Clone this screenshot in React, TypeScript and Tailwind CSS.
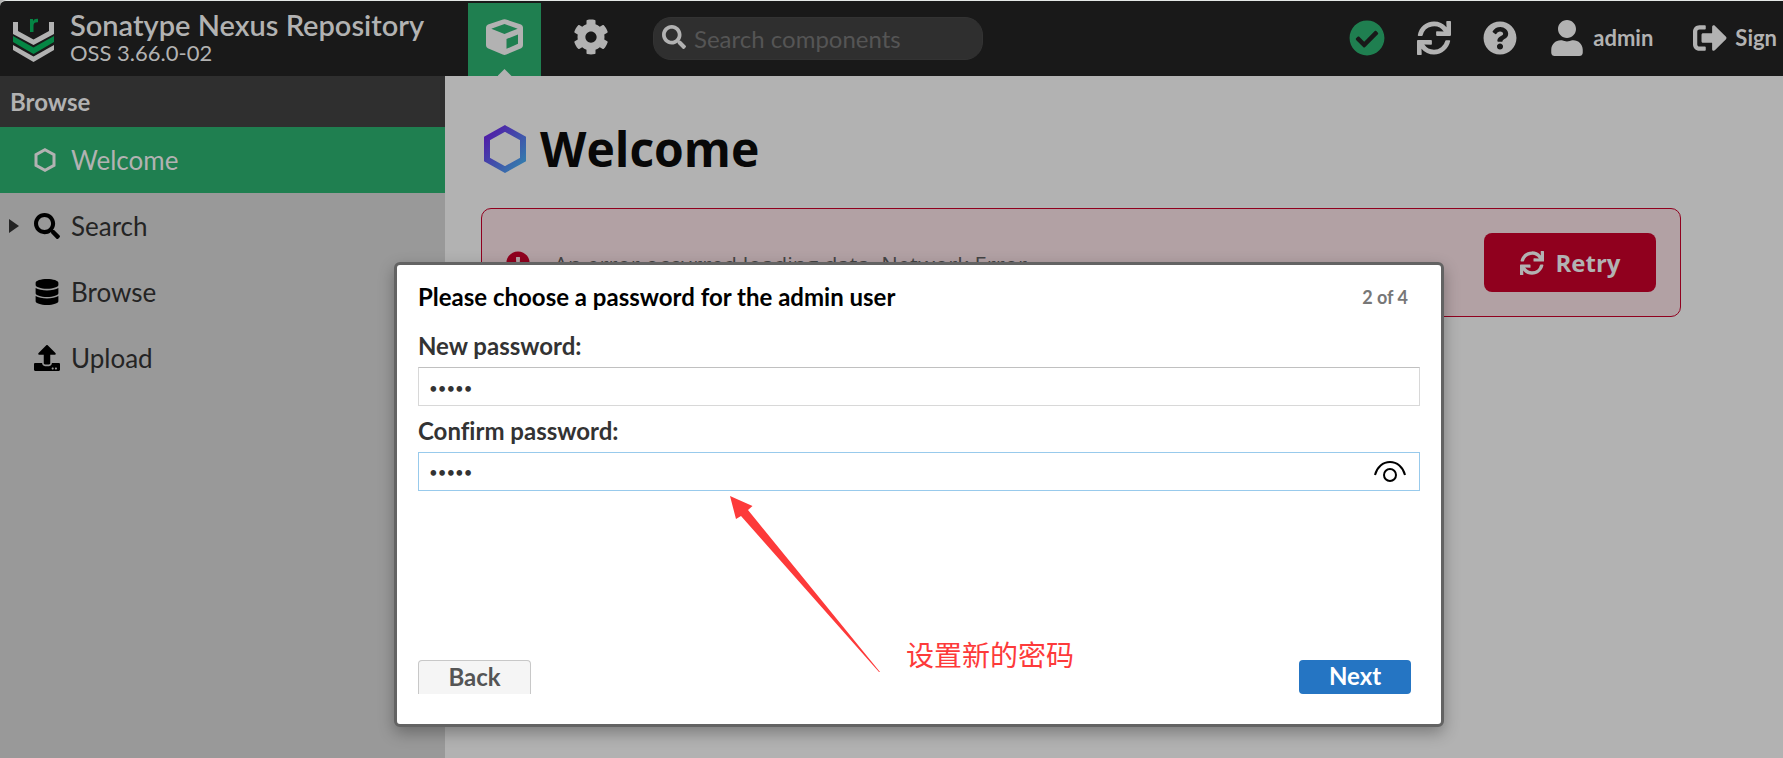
import { useState } from "react";
import {
  FaCheckCircle, FaCog, FaDatabase, FaExclamationCircle, FaQuestionCircle,
  FaSearch, FaSignOutAlt, FaSync, FaUpload, FaUser,
} from "react-icons/fa";

function Hexagon({ className, stroke }: { className: string; stroke: string }) {
  return (
    <svg viewBox="0 0 42 48" className={className} fill="none" aria-hidden="true">
      <defs>
        <linearGradient id="hex" x1="0" y1="0" x2="1" y2="1">
          <stop offset="0.1" stopColor="#4f20a8" />
          <stop offset="0.9" stopColor="#3578ad" />
        </linearGradient>
      </defs>
      <path d="M21 3.500 L39 13.500 V34.500 L21 44.500 L3 34.500 V13.500 Z" stroke={stroke} strokeWidth={6} />
    </svg>
  );
}

function Logo() {
  return (
    <svg viewBox="0 0 41 45" className="mt-1 h-[45px] w-[41px] shrink-0" aria-hidden="true">
      <path d="M0 4h5v9l15.500 8.500L36 13V4h5v12L20.500 27 0 16z" fill="#b2b2b2" />
      <path d="M0 18l20.500 11.500L41 18v6L20.500 36 0 24z" fill="#058544" />
      <path d="M0 27l20.500 11.500L41 27v5L20.500 44 0 32z" fill="#b2b2b2" />
      <path d="M17 1h3v2.200C21 1.500 22.500 .7 25 .9v3.300c-3-.2-4.500.8-4.500 3.500V14H17z" fill="#058544" />
    </svg>
  );
}

function Cube() {
  return (
    <svg viewBox="0 0 37 36" className="h-9 w-[37px]" aria-hidden="true">
      <path
        fillRule="evenodd"
        fill="#b2b2b2"
        d="M17 .5q1.500-.6 3 0L35 5.500q2 .8 2 3v17.800q0 2-1.800 2.900L20.300 35.500q-1.800.9-3.600 0L1.800 29.200Q0 28.300 0 26.300V8.500q0-2.200 2-3zM18.500 5 5.300 9.700 18.500 15l13.200-5.300zM20.500 20v9.800l11.500-5V15.400z"
      />
    </svg>
  );
}

const items = [
  { label: "Welcome", icon: <Hexagon className="h-6 w-[22px]" stroke="#b2b2b2" />, active: true },
  { label: "Search", icon: <FaSearch size={26} color="#000" />, expandable: true },
  { label: "Browse", icon: <FaDatabase size={26} color="#000" /> },
  { label: "Upload", icon: <FaUpload size={26} color="#000" /> },
];

export default function App() {
  const [first, setFirst] = useState("admin");
  const [second, setSecond] = useState("admin");
  return (
    <div className="relative flex min-h-screen flex-col overflow-hidden bg-[#b2b2b2] font-['Lato',sans-serif] [font-variant-ligatures:none]">
      <header className="flex h-[76px] shrink-0 items-center rounded-tl-md border-t border-[#e4e8e6] bg-[#191919] text-[#b2b2b2]">
        <div className="flex w-[468px] shrink-0 items-center gap-4 pl-[13px]">
          <Logo />
          <div className="pb-1">
            <div className="text-[29px] leading-8 font-semibold">Sonatype Nexus Repository</div>
            <div className="text-[22px] leading-6">OSS 3.66.0-02</div>
          </div>
        </div>
        <button aria-label="Browse" className="relative flex h-[73px] w-[73px] shrink-0 items-center justify-center self-end bg-[#1f7f50] pb-1.5">
          <Cube />
          <span className="absolute bottom-0 left-1/2 h-[7px] w-3.5 -translate-x-1/2 bg-[#b2b2b2] [clip-path:polygon(50%_0,100%_100%,0_100%)]" />
        </button>
        <button aria-label="Settings" className="ml-8 shrink-0 pb-1"><FaCog size={36} /></button>
        <label className="ml-11 flex h-[43px] w-[330px] items-center gap-2 rounded-[18px] border border-[#333] bg-[#2f2f2f] px-2">
          <FaSearch size={24} className="mb-1 shrink-0" />
          <input aria-label="Search components" placeholder="Search components" className="min-w-0 flex-1 bg-transparent text-[24px] outline-none placeholder:text-[#555]" />
        </label>
        <div className="ml-auto flex items-center pr-1.5 pb-0.5 text-[22px] font-bold">
          <button aria-label="System status"><FaCheckCircle size={36} color="#1f7f50" /></button>
          <button aria-label="Refresh" className="ml-8"><FaSync size={34} /></button>
          <button aria-label="Help" className="ml-8"><FaQuestionCircle size={34} /></button>
          <button className="ml-8 flex items-center gap-2"><FaUser size={36} /><span>admin</span></button>
          <button className="ml-10 flex items-center gap-2"><FaSignOutAlt size={34} /><span>Sign</span></button>
        </div>
      </header>
      <div className="flex flex-1">
        <nav className="w-[445px] shrink-0 bg-[#999]">
          <h2 className="flex h-[51px] items-center bg-[#2f2f2f] px-2.5 text-[24px] font-bold text-[#b2b2b2]">Browse</h2>
          {items.map((it) => (
            <a key={it.label} href="#" className={`flex h-[66px] items-center text-[26px] ${it.active ? "bg-[#1f7f50] text-[#b2b2b2]" : "text-[#242424]"}`}>
              <span className="flex w-[34px] pl-[9px]">
                {it.expandable && <span className="h-3.5 w-2.5 bg-[#242424] [clip-path:polygon(0_0,100%_50%,0_100%)]" />}
              </span>
              <span className="flex w-[37px]">{it.icon}</span>
              {it.label}
            </a>
          ))}
        </nav>
        <main className="min-w-0 flex-1 px-9 pt-10">
          <h1 className="flex h-[66px] items-center gap-3.5 pl-[3px] font-['Open_Sans',sans-serif] text-[48px] font-bold text-[#080808]">
            <Hexagon className="h-12 w-[42px]" stroke="url(#hex)" />
            Welcome
          </h1>
          <div className="mt-[26px] flex h-[109px] max-w-[1200px] items-center rounded-[10px] border border-[#90001e] bg-[#b2a1a4] px-6 font-['Open_Sans',sans-serif]">
            <FaExclamationCircle size={24} color="#90001e" />
            <p className="ml-6 pt-1 text-[22px] text-[#444]">An error occurred loading data. Network Error</p>
            <button className="ml-auto flex h-[59px] w-[172px] items-center justify-center gap-3 rounded-lg bg-[#90001e] text-[24px] font-bold text-[#b2b2b2]">
              <FaSync size={24} />Retry
            </button>
          </div>
        </main>
      </div>

      <div className="absolute inset-0 pt-[262px] pl-[394px]">
        <form role="dialog" aria-label="Choose a password" className="relative flex h-[465px] w-[1050px] flex-col rounded-md border-[3px] border-[#636363] bg-white px-[21px] shadow-[0_6px_16px_rgba(0,0,0,0.3)]">
          <div className="flex h-[66px] items-center justify-between pr-3 pb-0.5">
            <h2 className="text-[24px] font-bold text-black">Please choose a password for the admin user</h2>
            <span className="text-[18px] font-bold text-[#777]">2 of 4</span>
          </div>
          <label htmlFor="new" className="h-9 text-[24px] leading-[30px] font-bold text-[#333]">New password:</label>
          <input id="new" type="password" value={first} onChange={(e) => setFirst(e.target.value)} className="h-[39px] border border-[#d8d8d8] border-t-[#c0c0c0] px-2.5 pt-0.5 text-[15px] text-[#333] outline-none" />
          <label htmlFor="confirm" className="mt-2.5 h-9 text-[24px] leading-[30px] font-bold text-[#333]">Confirm password:</label>
          <div className="flex h-[39px] items-center border border-[#98caec] pr-3">
            <input id="confirm" type="password" value={second} onChange={(e) => setSecond(e.target.value)} className="min-w-0 flex-1 px-2.5 pt-0.5 text-[15px] text-[#333] outline-none" />
            <button type="button" aria-label="Show password">
              <svg viewBox="0 0 34 24" className="h-6 w-[34px]" fill="none" stroke="#000" strokeWidth="2">
                <path d="M2 15C4 7 10 2 17 2s13 5 15 13" />
                <circle cx="17" cy="15" r="6" />
              </svg>
            </button>
          </div>
          <div className="mt-auto mb-[30px] flex justify-between pr-[9px] text-[24px] leading-[30px] font-bold">
            <button type="button" className="h-[34px] w-[113px] rounded-t border border-b-0 border-[#c8c8c8] bg-[#f5f5f5] pb-0.5 text-[#555]">Back</button>
            <button type="button" className="h-[34px] w-28 rounded bg-[#2575c3] pb-0.5 text-white">Next</button>
          </div>
          <svg viewBox="0 0 150 178" className="absolute top-[231px] left-[333px] h-[178px] w-[150px]" aria-hidden="true">
            <path d="M0 0L22.500 10 18 14 150 176 149 176 11 20 6 23z" fill="#fd3a3a" />
          </svg>
          <p className="absolute top-[369px] left-[509px] font-['Noto_Sans_CJK_SC',sans-serif] text-[28px] leading-10 font-normal text-[#fd3a3a]">设置新的密码</p>
        </form>
      </div>
    </div>
  );
}
